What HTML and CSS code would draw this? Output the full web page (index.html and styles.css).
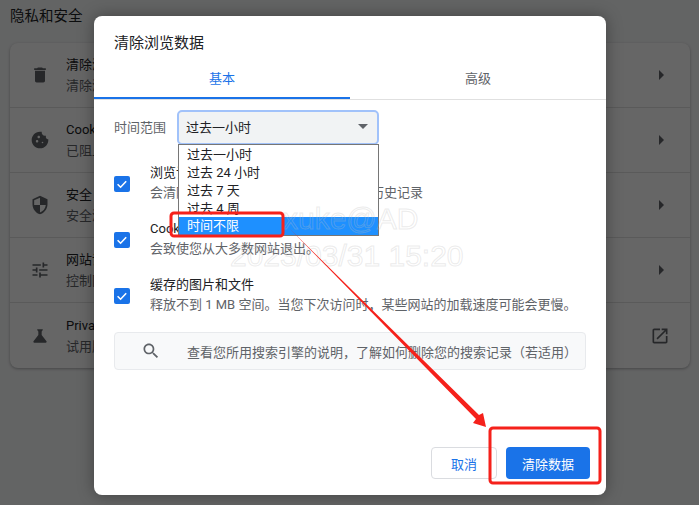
FILE: index.html
```html
<!DOCTYPE html>
<html lang="zh">
<head>
  <meta charset="utf-8">
  <title>清除浏览数据</title>
  <link rel="stylesheet" href="styles.css">
</head>
<body>
  <div class="settings">
    <h2 class="section-title">隐私和安全</h2>
    <div class="card">
      <div class="row">
        <svg class="row-icon" viewBox="0 0 24 24"><path d="M6 19c0 1.1.9 2 2 2h8c1.1 0 2-.9 2-2V7H6v12zM19 4h-3.5l-1-1h-5l-1 1H5v2h14V4z"/></svg>
        <div class="row-text">
          <div class="row-title">清除浏览数据</div>
          <div class="row-sub">清除浏览记录、Cookie、缓存及其他数据</div>
        </div>
        <span class="chevron"></span>
      </div>
      <div class="row">
        <svg class="row-icon" viewBox="0 0 24 24"><path d="M21.95 10.99c-1.79-.03-3.7-1.95-2.68-4.22-2.97 1-5.78-1.59-5.19-4.56C7.11.74 2 6.41 2 12c0 5.52 4.48 10 10 10 5.89 0 10.54-5.08 9.95-11.01zM8.5 15c-.83 0-1.5-.67-1.5-1.5S7.67 12 8.5 12s1.5.67 1.5 1.5S9.33 15 8.5 15zm2-5C9.67 10 9 9.33 9 8.5S9.67 7 10.5 7s1.5.67 1.5 1.5-.67 1.5-1.5 1.5zm4.5 6c-.55 0-1-.45-1-1s.45-1 1-1 1 .45 1 1-.45 1-1 1z"/></svg>
        <div class="row-text">
          <div class="row-title">Cookie 及其他网站数据</div>
          <div class="row-sub">已阻止无痕模式下的第三方 Cookie</div>
        </div>
        <span class="chevron"></span>
      </div>
      <div class="row">
        <svg class="row-icon" viewBox="0 0 24 24"><path d="M12 1L3 5v6c0 5.55 3.84 10.74 9 12 5.16-1.26 9-6.45 9-12V5l-9-4zm0 10.99h7c-.53 4.12-3.28 7.79-7 8.94V12H5V6.3l7-3.11v8.8z"/></svg>
        <div class="row-text">
          <div class="row-title">安全</div>
          <div class="row-sub">安全浏览（保护您免受危险网站的侵害）</div>
        </div>
        <span class="chevron"></span>
      </div>
      <div class="row">
        <svg class="row-icon" viewBox="0 0 24 24"><path d="M3 17v2h6v-2H3zM3 5v2h10V5H3zm10 16v-2h8v-2h-8v-2h-2v6h2zM7 9v2H3v2h4v2h2V9H7zm14 4v-2H11v2h10zm-6-4h2V7h4V5h-4V3h-2v6z"/></svg>
        <div class="row-text">
          <div class="row-title">网站设置</div>
          <div class="row-sub">控制网站可以使用和显示的信息</div>
        </div>
        <span class="chevron"></span>
      </div>
      <div class="row">
        <svg class="row-icon" viewBox="0 0 24 24"><path d="M19.8 18.4L14 10.67V6.5l1.35-1.69c.26-.33.03-.81-.39-.81H9.04c-.42 0-.65.48-.39.81L10 6.5v4.17L4.2 18.4c-.49.66-.02 1.6.8 1.6h14c.82 0 1.29-.94.8-1.6z"/></svg>
        <div class="row-text">
          <div class="row-title">Privacy Sandbox</div>
          <div class="row-sub">试用版功能已开启</div>
        </div>
        <svg class="row-link" viewBox="0 0 24 24"><path d="M19 19H5V5h7V3H5c-1.11 0-2 .9-2 2v14c0 1.1.89 2 2 2h14c1.1 0 2-.9 2-2v-7h-2v7zM14 3v2h3.59l-9.83 9.83 1.41 1.41L19 6.41V10h2V3h-7z"/></svg>
      </div>
    </div>
  </div>

  <div class="backdrop"></div>

  <div class="dialog">
    <div class="dialog-title">清除浏览数据</div>
    <div class="tabs">
      <div class="tab tab-active">基本</div>
      <div class="tab">高级</div>
    </div>

    <div class="range">
      <span class="range-label">时间范围</span>
      <div class="select">
        <span>过去一小时</span>
        <span class="select-arrow"></span>
        <ul class="options">
          <li>过去一小时</li>
          <li>过去 24 小时</li>
          <li>过去 7 天</li>
          <li>过去 4 周</li>
          <li class="option-selected">时间不限</li>
        </ul>
      </div>
    </div>

    <div class="check-row">
      <span class="checkbox"><svg viewBox="0 0 16 16"><path d="M3.6 8.2l3 3 5.6-6"/></svg></span>
      <div class="check-text">
        <div class="check-title">浏览记录</div>
        <div class="check-sub">会清除所有已登录并同步设备中的浏览历史记录</div>
      </div>
    </div>
    <div class="check-row">
      <span class="checkbox"><svg viewBox="0 0 16 16"><path d="M3.6 8.2l3 3 5.6-6"/></svg></span>
      <div class="check-text">
        <div class="check-title">Cookie 及其他网站数据</div>
        <div class="check-sub">会致使您从大多数网站退出。</div>
      </div>
    </div>
    <div class="check-row">
      <span class="checkbox"><svg viewBox="0 0 16 16"><path d="M3.6 8.2l3 3 5.6-6"/></svg></span>
      <div class="check-text">
        <div class="check-title">缓存的图片和文件</div>
        <div class="check-sub">释放不到 1 MB 空间。当您下次访问时，某些网站的加载速度可能会更慢。</div>
      </div>
    </div>

    <div class="search-note">
      <svg viewBox="0 0 24 24"><path d="M15.5 14h-.79l-.28-.27C15.41 12.59 16 11.11 16 9.5 16 5.91 13.09 3 9.5 3S3 5.91 3 9.5 5.91 16 9.5 16c1.61 0 3.09-.59 4.23-1.57l.27.28v.79l5 4.99L20.49 19l-4.99-5zm-6 0C7.01 14 5 11.99 5 9.5S7.01 5 9.5 5 14 7.01 14 9.5 11.99 14 9.5 14z"/></svg>
      <span>查看您所用搜索引擎的说明，了解如何删除您的搜索记录（若适用）</span>
    </div>

    <div class="dialog-buttons">
      <button class="btn-cancel">取消</button>
      <button class="btn-clear">清除数据</button>
    </div>
  </div>

  <!-- watermark and the red marks drawn on top of the screenshot -->
  <div class="watermark">
    <div class="watermark-user">xuke@AD</div>
    <div class="watermark-date">2023/03/31 15:20</div>
  </div>
  <svg class="marks" viewBox="0 0 699 505">
    <rect x="171" y="213" width="112" height="23" rx="3"/>
    <rect x="490" y="428" width="110" height="55" rx="3"/>
    <polygon class="arrow" points="290,229 479,415 483,413 486,427 473,423 476,419"/>
  </svg>
</body>
</html>
```

FILE: styles.css
```css
* {
  box-sizing: border-box;
}
body {
  margin: 0;
  width: 699px;
  height: 505px;
  overflow: hidden;
  position: relative;
  background-color: #f8f9fa;
  font-family: Roboto, "Noto Sans CJK SC", sans-serif;
  font-size: 13px;
  color: #202124;
}

/* settings page behind the dialog */
.settings {
  padding: 0 9px 0 10px;
}
.section-title {
  margin: 0;
  height: 43px;
  padding-top: 7px;
  font-size: 14.5px;
  line-height: 20px;
  font-weight: 400;
}
.card {
  background-color: #fff;
  border-radius: 8px;
  box-shadow: 0 1px 3px rgba(60, 64, 67, 0.4);
}
.row {
  display: flex;
  align-items: center;
  height: 65px;
  padding: 0 20px;
  border-bottom: 1px solid #e0e0e0;
}
.row:last-child {
  border-bottom: none;
}
.row-icon {
  width: 20px;
  height: 20px;
  margin-right: 16px;
  fill: #5f6368;
}
.row-text {
  flex: 1;
  line-height: 21px;
}
.row-sub {
  color: #5f6368;
}
.chevron {
  width: 0;
  height: 0;
  margin-right: 6px;
  border-left: 5px solid #5f6368;
  border-top: 5px solid transparent;
  border-bottom: 5px solid transparent;
}
.row-link {
  width: 20px;
  height: 20px;
  fill: #5f6368;
}
.backdrop {
  position: absolute;
  inset: 0;
  background-color: rgba(0, 0, 0, 0.6);
}

/* dialog */
.dialog {
  position: absolute;
  left: 94px;
  top: 16px;
  width: 512px;
  height: 479px;
  display: flex;
  flex-direction: column;
  background-color: #fff;
  border-radius: 8px;
  box-shadow: 0 0 16px rgba(0, 0, 0, 0.35);
}
.dialog-title {
  padding: 16px 20px 6px;
  font-size: 15px;
  line-height: 22px;
}
.tabs {
  display: flex;
  border-bottom: 1px solid #e0e0e0;
}
.tab {
  flex: 1;
  text-align: center;
  line-height: 37px;
  border-bottom: 2px solid transparent;
  color: #5f6368;
}
.tab-active {
  color: #1a73e8;
  border-bottom-color: #1a73e8;
}
.range {
  display: flex;
  align-items: center;
  margin: 10px 20px 11px;
}
.range-label {
  width: 63px;
  padding-bottom: 2px;
  color: #5f6368;
}
.select {
  position: relative;
  display: flex;
  align-items: center;
  justify-content: space-between;
  width: 202px;
  height: 35px;
  padding: 0 9px 2px 7px;
  background-color: #f1f3f4;
  border: 2px solid #a1c2fa;
  border-radius: 5px;
}
.select-arrow {
  width: 0;
  height: 0;
  border-top: 5px solid #5f6368;
  border-left: 5px solid transparent;
  border-right: 5px solid transparent;
}
.options {
  position: absolute;
  left: -1px;
  top: 32px;
  width: 201px;
  margin: 0;
  padding: 0;
  list-style: none;
  background-color: #fff;
  border: 1px solid #767676;
  color: #202124;
}
.options li {
  height: 18px;
  padding-left: 8px;
  line-height: 19px;
}
.options .option-selected {
  line-height: 18px;
  background-color: #1e90ff;
  color: #fff;
}
.check-row {
  display: flex;
  align-items: center;
  height: 56px;
  margin: 0 20px;
}
.checkbox {
  width: 16px;
  height: 16px;
  margin-right: 20px;
  background-color: #1a73e8;
  border-radius: 2px;
}
.checkbox svg {
  display: block;
  fill: none;
  stroke: #fff;
  stroke-width: 1.6;
}
.check-text {
  padding-bottom: 2px;
  line-height: 20px;
}
.check-sub {
  color: #5f6368;
}
.search-note {
  display: flex;
  align-items: center;
  height: 38px;
  margin: 8px 20px 0;
  padding-left: 26px;
  background-color: #f8f9fa;
  border: 1px solid #e8eaed;
  border-radius: 4px;
  color: #5f6368;
}
.search-note svg {
  width: 20px;
  height: 20px;
  margin-right: 26px;
  fill: #5f6368;
}
.dialog-buttons {
  display: flex;
  justify-content: flex-end;
  gap: 9px;
  margin-top: auto;
  padding: 0 16px 16px;
}
button {
  height: 32px;
  border-radius: 4px;
  font-family: inherit;
  font-size: 13px;
  padding: 0;
}
.btn-cancel {
  width: 66px;
  background-color: #fff;
  border: 1px solid #dadce0;
  color: #1a73e8;
}
.btn-clear {
  width: 84px;
  background-color: #1a73e8;
  border: none;
  color: #fff;
}

/* overlays */
.watermark {
  position: absolute;
  left: 230px;
  top: 200px;
  font-family: "Liberation Sans", sans-serif;
  font-size: 30px;
  line-height: 37px;
  color: transparent;
  -webkit-text-stroke: 1px rgba(190, 190, 190, 0.3);
  white-space: nowrap;
}
.watermark-user {
  margin-left: 53px;
}
.marks {
  position: absolute;
  left: 0;
  top: 0;
  width: 699px;
  height: 505px;
}
.marks rect {
  fill: none;
  stroke: #f5211b;
  stroke-width: 3;
}
.marks .arrow {
  fill: #f5211b;
}
```
